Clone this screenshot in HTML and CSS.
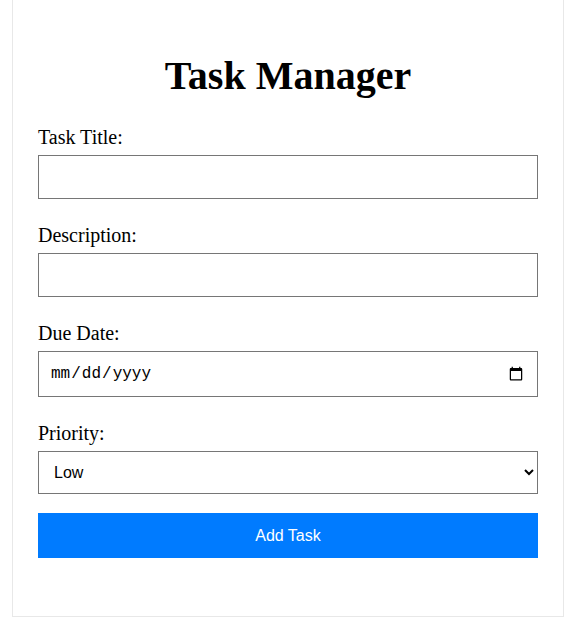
FILE: index.html
```html
<!DOCTYPE html>
<html lang="en">
<head>
<meta charset="utf-8">
<title>Task Manager</title>
<link rel="stylesheet" href="styles.css">
</head>
<body>
<div class="container">
  <h1 class="title">Task Manager</h1>
  <form class="task-form">
    <div class="field">
      <label class="label" for="title">Task Title:</label>
      <input class="control" type="text" id="title">
    </div>
    <div class="field">
      <label class="label" for="desc">Description:</label>
      <input class="control" type="text" id="desc">
    </div>
    <div class="field">
      <label class="label" for="due">Due Date:</label>
      <input class="control control-date" type="date" id="due">
    </div>
    <div class="field field-last">
      <label class="label" for="prio">Priority:</label>
      <select class="control control-select" id="prio">
        <option>Low</option>
        <option>Medium</option>
        <option>High</option>
      </select>
    </div>
    <button class="submit" type="button">Add Task</button>
  </form>
</div>
</body>
</html>
```

FILE: styles.css
```css
html, body {
  margin: 0;
  padding: 0;
  background: #ffffff;
}

body {
  font-family: "Liberation Serif", "Times New Roman", serif;
  color: #000;
}

.container {
  width: 500px;
  margin: 0 0 0 12px;
  padding: 53px 25px 58px;
  border: 1px solid #e8e8e8;
  border-top: none;
}

.title {
  margin: 0 0 26px;
  font-size: 40px;
  line-height: 46px;
  font-weight: bold;
  text-align: center;
}

.field {
  margin-bottom: 24px;
}

.field-last {
  margin-bottom: 19px;
}

.label {
  display: block;
  font-size: 20px;
  line-height: 23px;
  padding-top: 1px;
  margin-bottom: 6px;
}

.control {
  display: block;
  width: 100%;
  box-sizing: border-box;
  margin: 0;
  padding: 12px;
  border: 1px solid #767676;
  border-radius: 0;
  background: #fff;
  font-family: "Liberation Sans", Arial, sans-serif;
  font-size: 16px;
  line-height: 18px;
  height: 44px;
}

.control-date {
  font-family: "Liberation Mono", "DejaVu Sans Mono", monospace;
  height: 46px;
  padding: 12px 11px;
}

.control-select {
  height: 43px;
  padding: 0 11px;
  color: #000;
}

.submit {
  display: block;
  width: 100%;
  height: 45px;
  margin: 0;
  border: none;
  background: #007bff;
  color: #fff;
  font-family: "Liberation Sans", Arial, sans-serif;
  font-size: 16px;
  cursor: pointer;
}
```
